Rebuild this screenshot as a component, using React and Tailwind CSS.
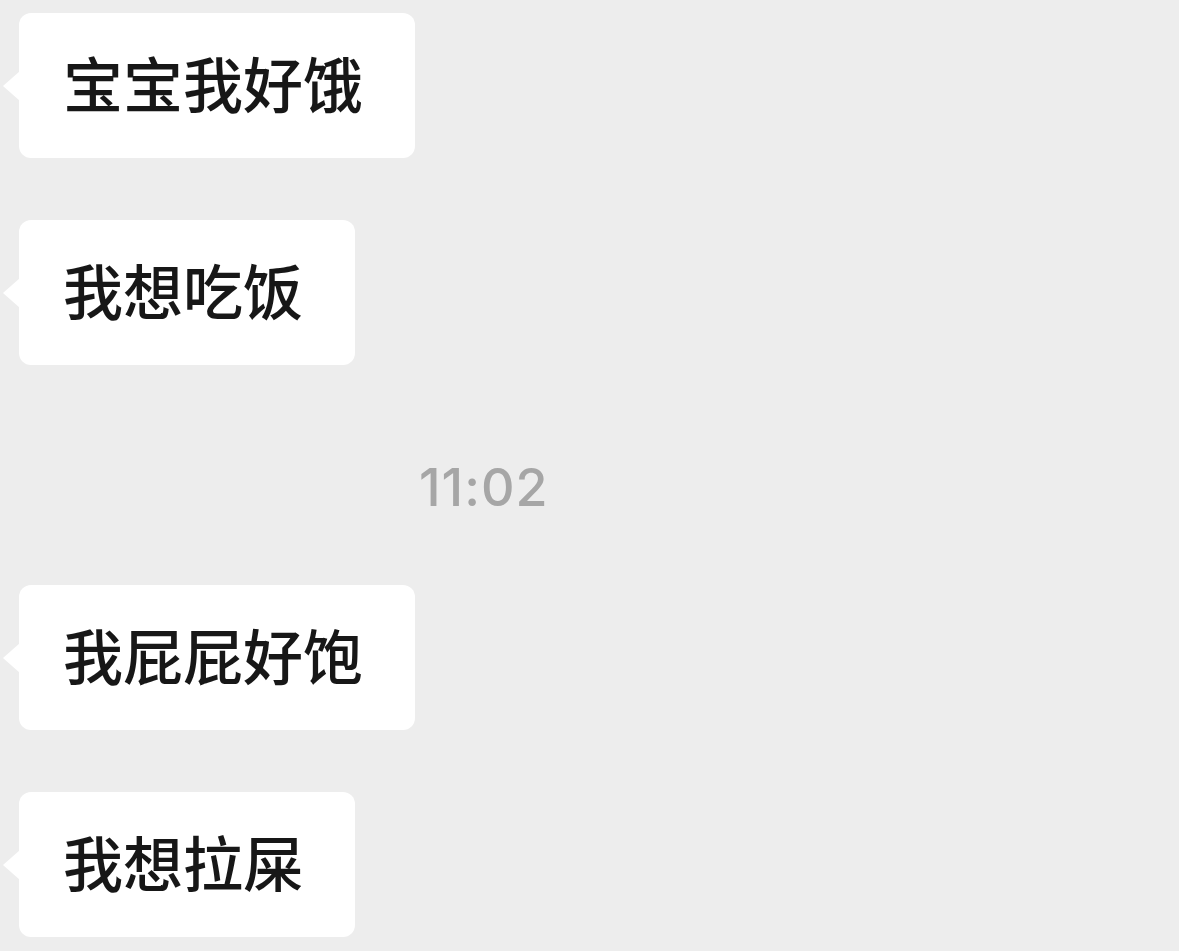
const messages = [
  { id: 1, text: "宝宝我好饿" },
  { id: 2, text: "我想吃饭" },
  { id: "t", time: "11:02" },
  { id: 3, text: "我屁屁好饱" },
  { id: 4, text: "我想拉屎" },
]

function Bubble({ text }) {
  return (
    <div className="relative flex h-[145px] items-center rounded-[12px] bg-white pb-[8px] pl-[44px] pr-[52px]">
      {/* tail */}
      <div className="absolute left-[-16px] top-1/2 h-0 w-0 -translate-y-1/2 border-y-[15px] border-r-[17px] border-y-transparent border-r-white" />
      <span className="text-[60px] font-medium leading-none tracking-normal text-[#171717] [font-family:'Noto_Sans_CJK_SC',sans-serif]">
        {text}
      </span>
    </div>
  )
}

export default function App() {
  return (
    <div className="min-h-[951px] w-[1179px] overflow-hidden bg-[#ededed] pl-[19px] pt-[13px]">
      <div className="flex flex-col items-start">
        <Bubble text={messages[0].text} />
        <div className="mt-[62px]">
          <Bubble text={messages[1].text} />
        </div>
        <div className="flex h-[220px] w-full items-center pt-[26px]">
          <span className="ml-[400px] text-[52px] font-medium tracking-[1px] text-[#a6a6a6] [font-family:Inter,'Liberation_Sans',sans-serif]">
            11:02
          </span>
        </div>
        <Bubble text={messages[3].text} />
        <div className="mt-[62px]">
          <Bubble text={messages[4].text} />
        </div>
      </div>
    </div>
  )
}
